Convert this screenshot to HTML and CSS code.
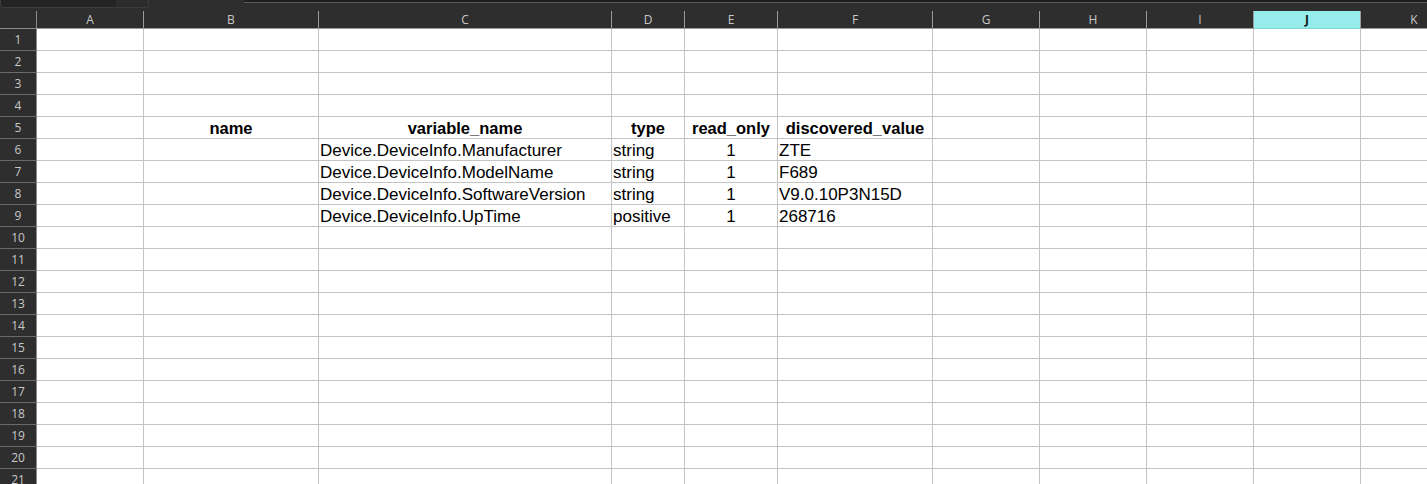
FILE: index.html
```html
<!DOCTYPE html>
<html lang="en">
<head>
    <meta charset="UTF-8">
    <meta name="viewport" content="width=device-width, initial-scale=1.0">
    <title>Discovered variables</title>
    <link rel="stylesheet" href="styles.css">
</head>
<body>

    <div class="toolbar">
        <div class="name-box">
            <span class="name-field"></span>
            <span class="name-drop"></span>
        </div>
        <div class="formula-bar"></div>
    </div>

    <div class="sheet">
        <!-- column letters -->
        <div class="row col-head">
            <div class="corner"></div>
            <div>A</div><div>B</div><div>C</div><div>D</div><div>E</div><div>F</div>
            <div>G</div><div>H</div><div>I</div><div class="active">J</div><div>K</div>
        </div>

        <div class="row"><div class="num">1</div><div></div><div></div><div></div><div></div><div></div><div></div><div></div><div></div><div></div><div></div><div></div></div>
        <div class="row"><div class="num">2</div><div></div><div></div><div></div><div></div><div></div><div></div><div></div><div></div><div></div><div></div><div></div></div>
        <div class="row"><div class="num">3</div><div></div><div></div><div></div><div></div><div></div><div></div><div></div><div></div><div></div><div></div><div></div></div>
        <div class="row"><div class="num">4</div><div></div><div></div><div></div><div></div><div></div><div></div><div></div><div></div><div></div><div></div><div></div></div>
        <div class="row">
            <div class="num">5</div><div></div>
            <div class="th">name</div>
            <div class="th">variable_name</div>
            <div class="th">type</div>
            <div class="th">read_only</div>
            <div class="th">discovered_value</div>
            <div></div><div></div><div></div><div></div><div></div>
        </div>
        <div class="row">
            <div class="num">6</div><div></div><div></div>
            <div>Device.DeviceInfo.Manufacturer</div>
            <div>string</div>
            <div class="center">1</div>
            <div>ZTE</div>
            <div></div><div></div><div></div><div></div><div></div>
        </div>
        <div class="row">
            <div class="num">7</div><div></div><div></div>
            <div>Device.DeviceInfo.ModelName</div>
            <div>string</div>
            <div class="center">1</div>
            <div>F689</div>
            <div></div><div></div><div></div><div></div><div></div>
        </div>
        <div class="row">
            <div class="num">8</div><div></div><div></div>
            <div>Device.DeviceInfo.SoftwareVersion</div>
            <div>string</div>
            <div class="center">1</div>
            <div>V9.0.10P3N15D</div>
            <div></div><div></div><div></div><div></div><div></div>
        </div>
        <div class="row">
            <div class="num">9</div><div></div><div></div>
            <div>Device.DeviceInfo.UpTime</div>
            <div>positive</div>
            <div class="center">1</div>
            <div>268716</div>
            <div></div><div></div><div></div><div></div><div></div>
        </div>
        <div class="row"><div class="num">10</div><div></div><div></div><div></div><div></div><div></div><div></div><div></div><div></div><div></div><div></div><div></div></div>
        <div class="row"><div class="num">11</div><div></div><div></div><div></div><div></div><div></div><div></div><div></div><div></div><div></div><div></div><div></div></div>
        <div class="row"><div class="num">12</div><div></div><div></div><div></div><div></div><div></div><div></div><div></div><div></div><div></div><div></div><div></div></div>
        <div class="row"><div class="num">13</div><div></div><div></div><div></div><div></div><div></div><div></div><div></div><div></div><div></div><div></div><div></div></div>
        <div class="row"><div class="num">14</div><div></div><div></div><div></div><div></div><div></div><div></div><div></div><div></div><div></div><div></div><div></div></div>
        <div class="row"><div class="num">15</div><div></div><div></div><div></div><div></div><div></div><div></div><div></div><div></div><div></div><div></div><div></div></div>
        <div class="row"><div class="num">16</div><div></div><div></div><div></div><div></div><div></div><div></div><div></div><div></div><div></div><div></div><div></div></div>
        <div class="row"><div class="num">17</div><div></div><div></div><div></div><div></div><div></div><div></div><div></div><div></div><div></div><div></div><div></div></div>
        <div class="row"><div class="num">18</div><div></div><div></div><div></div><div></div><div></div><div></div><div></div><div></div><div></div><div></div><div></div></div>
        <div class="row"><div class="num">19</div><div></div><div></div><div></div><div></div><div></div><div></div><div></div><div></div><div></div><div></div><div></div></div>
        <div class="row"><div class="num">20</div><div></div><div></div><div></div><div></div><div></div><div></div><div></div><div></div><div></div><div></div><div></div></div>
        <div class="row"><div class="num">21</div><div></div><div></div><div></div><div></div><div></div><div></div><div></div><div></div><div></div><div></div><div></div></div>
    </div>

</body>
</html>
```

FILE: styles.css
```css
* {
    box-sizing: border-box;
}

body {
    margin: 0;
    background-color: #2e2e2e;
    overflow: hidden;
    font-family: "Liberation Sans", Arial, sans-serif;
}

/* top strip: name box and formula input */
.toolbar {
    display: flex;
    height: 11px;
    background-color: #2e2e2e;
}

.name-box {
    display: flex;
    width: 149px;
    height: 8px;
    border: 1px solid #3c3c3c;
    border-top: none;
    border-radius: 0 0 4px 4px;
    overflow: hidden;
}

.name-field {
    width: 115px;
    background-color: #242424;
}

.name-drop {
    flex: 1;
    background-color: #2c2c2c;
}

.formula-bar {
    margin-left: 95px;
    flex: 1;
    height: 3px;
    background-color: #1e1e1e;
    border-bottom: 1px solid #5a5a5a;
}

.sheet {
    background-color: #fff;
}

.row {
    display: grid;
    grid-template-columns: 37px 107px 175px 293px 73px 93px 155px 107px 107px 107px 107px 107px;
    height: 22px;
    font-size: 17px;
    color: #000;
}

.row > div {
    border-right: 1px solid #c4c4c4;
    border-bottom: 1px solid #c4c4c4;
    padding: 0 0 0 1px;
    display: flex;
    align-items: flex-end;
    line-height: 19px;
    white-space: nowrap;
    overflow: visible;
}

.row > .num {
    background-color: #2e2e2e;
    color: #c8c8c8;
    border-right-color: #8c8c8c;
    border-bottom-color: #6a6a6a;
    font-family: "Open Sans", "Noto Sans", sans-serif;
    font-size: 12px;
    justify-content: center;
    align-items: center;
    line-height: normal;
    padding: 0;
}

.row > .th {
    font-weight: bold;
    font-size: 16.5px;
    justify-content: center;
    padding-left: 0;
}

.row > .center {
    justify-content: center;
    padding-left: 0;
}

/* column letters */
.col-head {
    height: 18px;
    background-color: #2e2e2e;
}

.col-head > div {
    color: #c8c8c8;
    border-right-color: #9a9a9a;
    border-bottom-color: #9a9a9a;
    font-family: "Open Sans", "Noto Sans", sans-serif;
    font-size: 12px;
    justify-content: center;
    align-items: center;
    line-height: normal;
    padding: 0;
}

.col-head > .corner {
    border-right-color: #8c8c8c;
    border-bottom-color: #8c8c8c;
}

.col-head > .active {
    background-color: #96ebeb;
    color: #111;
    font-weight: bold;
    border-bottom-color: #7fd4d4;
}
```
